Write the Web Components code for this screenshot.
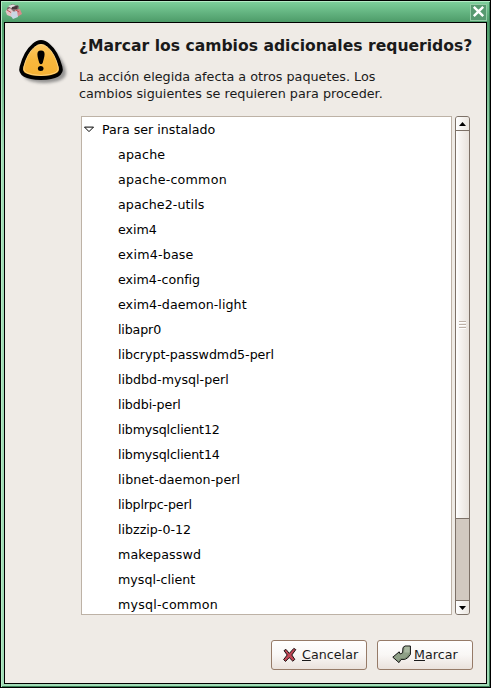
<!DOCTYPE html>
<html lang="es"><head><meta charset="utf-8"><title>Synaptic</title>
<style>html,body{margin:0;height:100%;overflow:hidden;background:#000}body{font:12.65px/17px "DejaVu Sans",sans-serif;color:#000}</style></head>
<body>
<dialog-window>
  <alert-heading slot="head">
    <span slot="title">¿Marcar los cambios adicionales requeridos?</span>
    <span slot="line1">La acción elegida afecta a otros paquetes. Los</span>
    <span slot="line2">cambios siguientes se requieren para proceder.</span>
  </alert-heading>
  <package-list label="Para ser instalado" items="apache:1,apache-common:3,apache2-utils:1,exim4:0,exim4-base:2,exim4-config:0,exim4-daemon-light:1,libapr0:-1,libcrypt-passwdmd5-perl:-1,libdbd-mysql-perl:0,libdbi-perl:-1,libmysqlclient12:-2,libmysqlclient14:-2,libnet-daemon-perl:1,libplrpc-perl:-2,libzzip-0-12:0,makepasswd:1,mysql-client:0,mysql-common:2.5"></package-list>
  <push-button slot="actions">
    <svg slot="icon" width="16" height="18" viewBox="0 0 16 18"><path d="M4 3.4 7.3 7.4 11.8 2.4 13.8 3.6 9.8 9 12.8 13.4 10.8 15.2 7.2 11.6 3.6 15.4 1.6 13.6 5.2 9 2 4.6Z" fill="#c14655" stroke="#1a1010"/></svg><u>C</u>ancelar
  </push-button>
  <push-button slot="actions" class="apply">
    <svg slot="icon" width="20" height="20" viewBox="0 0 20 20"><path d="M11 2.5 13 1H18.4V9.5L15.5 13 12.5 14.5H9L7 17.6 .8 12.2 7.2 6.8 8.2 9 10.6 7.8Z" fill="#8fa087" stroke="#111"/><path d="M12.8 1.8H17.6V7.4H12.3Z" fill="#a9b8a1"/><path d="M17.6 8.5 15 12.2 12 13.7H8.5L7 16.2" fill="none" stroke="#71826b"/></svg><u>M</u>arcar
  </push-button>
</dialog-window>
<script>
const mount=(el,html)=>{el.attachShadow({mode:'open'}).innerHTML=html};
customElements.define('dialog-window',class extends HTMLElement{connectedCallback(){mount(this,`<style>
:host{display:flex;flex-direction:column;box-sizing:border-box;width:491px;height:688px;border:1px solid #000;background:linear-gradient(#7fd29d,#4d9b69 21px,#a0dbb6 150px);box-shadow:inset 1px 1px #b4ebc6,inset -1px -1px #3a8056;padding:0 3px 3px}
header{height:21px;display:flex;justify-content:space-between;flex:none;align-items:flex-start}
.app{margin:2px 0 0 1px}.close{margin:3px 0 0 0}
main{flex:1;min-height:0;background:#efebe6;border:1px solid #000;display:flex;flex-direction:column}
.body{padding:0 16px 0 76px}footer{display:flex;gap:10px;justify-content:flex-end;padding:25px 13px 0 0}
</style><header>
<svg class="app" width="18" height="18" viewBox="0 0 18 18"><path d="M2 5 7 1 14 3 13 8 8 11 2 9Z" fill="#7b6b6b"/><path d="M3 3 8 1.5 11 3 6 5Z" fill="#e3dfe0"/><path d="M7 4 13 2.5 12 6 7 6Z" fill="#46383b"/><path d="M.5 8 5 5 9 9 7 14 2 12Z" fill="#e3c3c5"/><path d="M10 7 15 6 17 11 12 14 9 11Z" fill="#d9898b"/><path d="M7 9 12 8 13 14 8 16 6 13Z" fill="#c9d7e4"/><path d="M2 7 6 9.5M11 7 14 9" stroke="#b95054"/></svg>
<svg class="close" width="17" height="17" viewBox="0 0 17 17"><rect x=".5" y=".5" width="16" height="16" fill="#579a70" stroke="#94cda7"/><path d="M3.8 2.8 13.2 12.2M13.2 2.8 3.8 12.2" stroke="#fff" stroke-width="2.4"/></svg>
</header><main><slot name="head"></slot><div class="body"><slot></slot></div><footer><slot name="actions"></slot></footer></main>`)}});
customElements.define('alert-heading',class extends HTMLElement{connectedCallback(){mount(this,`<style>
:host{display:flex;height:93px;color:#1a1a1a}svg{flex:none;margin:12px 8px 0 10px}.t{padding-top:12px;white-space:nowrap}
h1{font-size:15.6px;line-height:22px;margin:0 0 11px;font-weight:bold}p{margin:0;font-size:12.77px}
</style><svg width="56" height="54" viewBox="0 0 56 54"><defs><linearGradient id="g" x2="0" y2="1"><stop stop-color="#ffcc68"/><stop offset=".5" stop-color="#f8b83d"/><stop offset="1" stop-color="#f5b033"/></linearGradient><filter id="b" x="-20%" y="-20%" width="140%" height="140%"><feGaussianBlur stdDeviation="1.8"/></filter></defs>
<path d="M20 12Q28 3 36 12Q51 27 51 38Q51 47 29 48Q8 47 8 38Q8 26 20 12Z" fill="#777" opacity=".75" filter="url(#b)"/>
<path d="M18.5 10.5Q26 3.5 33.5 10.5Q41.5 17 45.5 32Q48.5 42.5 26 43Q3.5 42.5 6.5 32Q10.5 17 18.5 10.5Z" fill="url(#g)" stroke="#000" stroke-width="3.8"/>
<path d="M19 12.5Q26 6.5 33 12.5Q40 19 43.2 32Q45.5 39.5 26 40.5Q6.5 39.5 8.8 32Q12 19 19 12.5Z" fill="none" stroke="#ffdc90" stroke-width=".8"/>
<path d="M26 15.5C20.5 15.5 22.5 21.5 24.3 28Q26 30.5 27.7 28C29.5 21.5 31.5 15.5 26 15.5Z"/><ellipse cx="25.7" cy="33.5" rx="2.8" ry="2.5"/></svg>
<div class="t"><h1><slot name="title"></slot></h1><p><slot name="line1"></slot></p><p><slot name="line2"></slot></p></div>`)}});
customElements.define('package-list',class extends HTMLElement{connectedCallback(){mount(this,`<style>
:host{display:flex;gap:3px;height:499px}
.list{box-sizing:border-box;width:372px;border:1px solid #bdb2a6;background:#fff;overflow:hidden}
.row{height:25px;line-height:25px;padding-left:36px;white-space:nowrap}.root{padding-left:2px;display:flex;align-items:center}.root svg{margin-right:8px}
</style><div class="list"><div class="row root"><svg width="10" height="7" viewBox="0 0 10 7"><path d="M.5 1.1H9.5L5 5.6Z" fill="#fff" stroke="#000"/></svg><span>${this.getAttribute('label')}</span></div>${this.getAttribute('items').split(',').map(t=>{const [name,extra]=t.split(':');return `<div class="row" style="letter-spacing:${extra/name.length}px">${name}</div>`}).join('')}</div><scroll-bar></scroll-bar>`)}});
customElements.define('scroll-bar',class extends HTMLElement{connectedCallback(){mount(this,`<style>
:host{display:flex;flex-direction:column;box-sizing:border-box;width:15px;height:499px;border:1px solid #7d7167;border-radius:3px;background:#d2c9c0;overflow:hidden}
i{display:flex;flex:none;height:13px;align-items:center;justify-content:center;background:linear-gradient(90deg,#fff,#ebe6e0)}
.thumb{height:387px;border:solid #7d7167;border-width:1px 0;background:linear-gradient(90deg,#fff,#f5f2ef 35%,#e8e2dc)}span{flex:1}.down{border-top:1px solid #7d7167}
</style><i><svg width="7" height="4"><path d="M0 4 3.5 0 7 4Z"/></svg></i><i class="thumb"><svg width="7" height="8"><path d="M0 .5H7M0 3.5H7M0 6.5H7" stroke="#bdb1a7"/><path d="M0 1.5H7M0 4.5H7M0 7.5H7" stroke="#fff"/></svg></i><span></span><i class="down"><svg width="7" height="4"><path d="M0 0H7L3.5 4Z"/></svg></i>`)}});
customElements.define('push-button',class extends HTMLElement{connectedCallback(){mount(this,`<style>
:host{display:flex;box-sizing:border-box;width:96px;height:30px;border:1px solid #967b68;border-radius:3px;background:linear-gradient(#fff,#f9f7f5 50%,#eae2dc);align-items:center;padding-left:10px;color:#1a1a1a}
span{margin-top:-2px;letter-spacing:.06px}:host(.apply){padding-left:14px}::slotted(svg){flex:none;margin-right:4px}:host(.apply) ::slotted(svg){margin-right:2px}
</style><slot name="icon"></slot><span><slot></slot></span>`)}});
</script></body></html>
